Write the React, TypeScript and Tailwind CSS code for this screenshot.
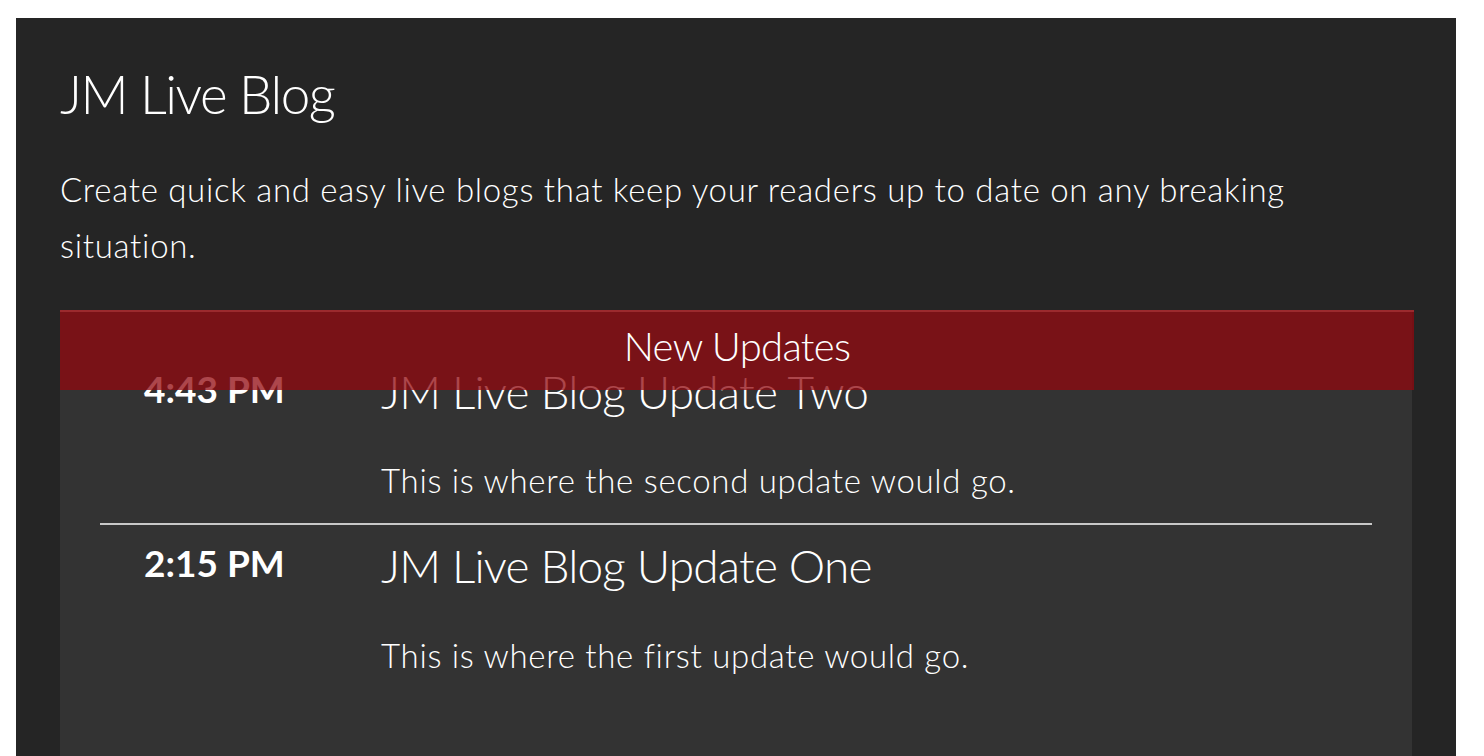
export default function App() {
  const updates = [
    {
      time: '4:43 PM',
      title: 'JM Live Blog Update Two',
      body: 'This is where the second update would go.',
    },
    {
      time: '2:15 PM',
      title: 'JM Live Blog Update One',
      body: 'This is where the first update would go.',
    },
  ]

  return (
    <div className="min-h-screen bg-white pt-[18px] font-['Lato',sans-serif] text-white">
      <div className="ml-[16px] mr-[28px] bg-[#252525] px-[44px] pt-[44px] pb-[80px]">
        {/* Header */}
        <h1 className="text-[53px] leading-[1.22] font-light tracking-[-1.5px]">JM Live Blog</h1>
        <p className="mt-[34px] text-[33px] leading-[56px] font-light tracking-[0.7px]">
          Create quick and easy live blogs that keep your readers up to date on any breaking situation.
        </p>

        {/* Feed */}
        <div className="relative mt-[37px] bg-[#333333] px-[40px] pt-[41px] pb-[60px]">
          <div className="absolute top-0 left-0 right-[-2px] h-[80px] border-t-2 border-[#9b2a2e] bg-[rgba(146,8,15,0.75)] pt-[10px] text-center">
            <span className="text-[40px] leading-[1.2] font-light tracking-[-0.7px]">New Updates</span>
          </div>

          {updates.map((u, i) => (
            <div
              key={i}
              className={`flex items-start pt-[13px] pb-[23px] ${i < updates.length - 1 ? 'border-b-2 border-[#c8c8c8]' : ''}`}
            >
              <div className="w-[281px] shrink-0 pl-[44px] pt-[3px] text-[37px] leading-[1.2] font-bold">
                {u.time}
              </div>
              <div>
                <h2 className="text-[46px] leading-[1.2] font-light tracking-[-0.8px]">{u.title}</h2>
                <p className="mt-[42px] text-[33px] leading-[1.2] font-light tracking-[0.7px]">{u.body}</p>
              </div>
            </div>
          ))}
        </div>
      </div>
    </div>
  )
}
